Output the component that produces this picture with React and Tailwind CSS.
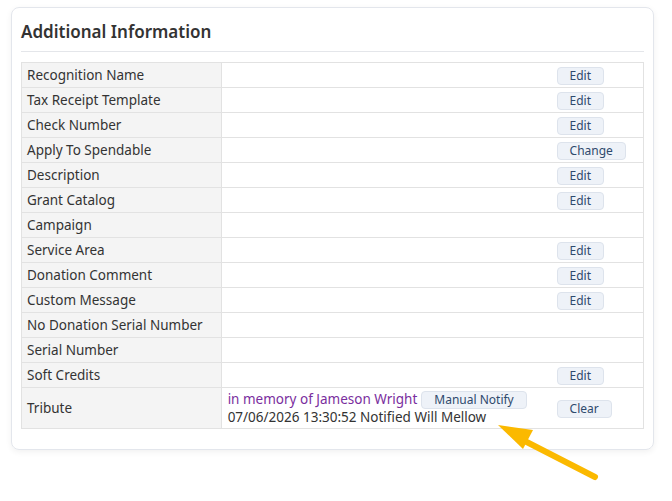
import React from "react";

const rows = [
  { label: "Recognition Name", action: "Edit" },
  { label: "Tax Receipt Template", action: "Edit" },
  { label: "Check Number", action: "Edit" },
  { label: "Apply To Spendable", action: "Change" },
  { label: "Description", action: "Edit" },
  { label: "Grant Catalog", action: "Edit" },
  { label: "Campaign" },
  { label: "Service Area", action: "Edit" },
  { label: "Donation Comment", action: "Edit" },
  { label: "Custom Message", action: "Edit" },
  { label: "No Donation Serial Number" },
  { label: "Serial Number" },
  { label: "Soft Credits", action: "Edit" },
];

function SmallButton({ children }) {
  return (
    <button className="h-[18px] px-[12px] rounded-[4px] border border-[#dde3ec] bg-[#eef2f8] text-[12px] leading-none text-[#2f4a6d]">
      {children}
    </button>
  );
}

export default function App() {
  return (
    <div
      className="relative w-[672px] h-[501px] bg-white pt-[7px] pl-[11px]"
      style={{ fontFamily: '"Noto Sans", "Open Sans", sans-serif' }}
    >
      <div className="w-[643px] rounded-[8px] border border-[#e3e6ec] shadow-[0_2px_6px_rgba(0,0,0,0.06)] px-[9px] pt-[12px] pb-[20px]">
        <h2 className="text-[17px] font-semibold text-[#333] leading-[24px] pb-[7px] border-b border-[#e4e6ea]">
          Additional Information
        </h2>
        <table className="mt-[10px] w-[623px] border-collapse text-[13.5px] text-[#333]">
          <colgroup>
            <col className="w-[200px]" />
            <col className="w-[329px]" />
            <col className="w-[94px]" />
          </colgroup>
          <tbody>
            {rows.map((r) => (
              <tr key={r.label} className="h-[25px]">
                <td className="border border-[#e2e2e2] bg-[#f4f4f4] px-[5px] py-0 leading-[24px]">
                  {r.label}
                </td>
                <td className="border-y border-l border-[#e2e2e2]" />
                <td className="border-y border-r border-[#e2e2e2] pl-[7px]">
                  {r.action && <SmallButton>{r.action}</SmallButton>}
                </td>
              </tr>
            ))}
            <tr className="h-[41px]">
              <td className="border border-[#e2e2e2] bg-[#f4f4f4] px-[5px]">Tribute</td>
              <td className="border-y border-l border-[#e2e2e2] px-[6px] py-[2px] leading-[17px]">
                <div className="flex items-center gap-[4px]">
                  <span className="text-[#7a2e9e]">in memory of Jameson Wright</span>
                  <SmallButton>Manual Notify</SmallButton>
                </div>
                <div>07/06/2026 13:30:52 Notified Will Mellow</div>
              </td>
              <td className="border-y border-r border-[#e2e2e2] pl-[7px]">
                <SmallButton>Clear</SmallButton>
              </td>
            </tr>
          </tbody>
        </table>
      </div>
      <svg className="absolute left-0 top-0 pointer-events-none" width="672" height="501">
        <line x1="595" y1="477" x2="515" y2="436" stroke="#fbb900" strokeWidth="6" strokeLinecap="round" />
        <polygon points="498,425 533,430 523,449" fill="#fbb900" />
      </svg>
    </div>
  );
}
